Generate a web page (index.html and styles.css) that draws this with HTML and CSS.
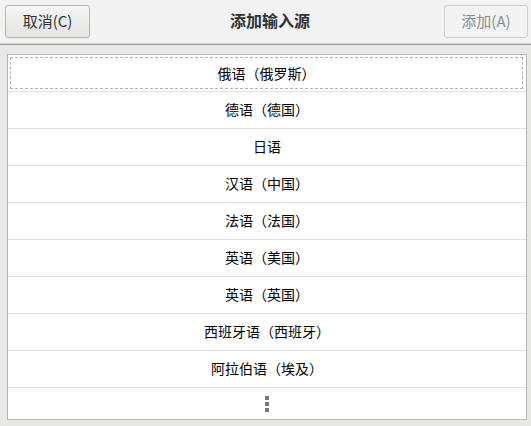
FILE: index.html
```html
<!DOCTYPE html>
<html lang="zh-CN">
<head>
<meta charset="utf-8">
<link rel="stylesheet" href="styles.css">
</head>
<body>
<div class="dialog">
  <header class="headerbar">
    <button class="btn">取消(C)</button>
    <div class="title">添加输入源</div>
    <button class="btn btn-disabled">添加(A)</button>
  </header>
  <main class="content">
    <div class="frame">
      <div class="row row-focus"><span class="focus">俄语（俄罗斯）</span></div>
      <div class="row">德语（德国）</div>
      <div class="row">日语</div>
      <div class="row">汉语（中国）</div>
      <div class="row">法语（法国）</div>
      <div class="row">英语（美国）</div>
      <div class="row">英语（英国）</div>
      <div class="row">西班牙语（西班牙）</div>
      <div class="row">阿拉伯语（埃及）</div>
      <div class="row row-more">
        <span class="dots"><i></i><i></i><i></i></span>
      </div>
    </div>
  </main>
</div>
</body>
</html>
```

FILE: styles.css
```css
* { box-sizing: border-box; }
html, body {
  margin: 0;
  padding: 0;
  width: 531px;
  height: 426px;
  overflow: hidden;
  font-family: "Noto Sans CJK SC", "Noto Sans", sans-serif;
  color: #000;
}
.dialog {
  display: flex;
  flex-direction: column;
  height: 426px;
  background: #e8e8e7;
}
.headerbar {
  height: 45px;
  flex: none;
  background: #f2f2f2;
  border-bottom: 1px solid #9b9b99;
  box-shadow: 0 -1px 0 #d6d6d4 inset;
  display: flex;
  align-items: flex-start;
  justify-content: space-between;
  padding: 5px 3px 0 5px;
}
.btn {
  height: 33px;
  width: 85px;
  font-family: inherit;
  font-size: 15px;
  color: #2e3436;
  background: linear-gradient(#f6f6f5, #e3e3e1);
  border: 1px solid #b6b6b3;
  border-radius: 3px;
  padding: 0 0 2px 0;
  line-height: 29px;
  box-shadow: 0 1px 0 rgba(0,0,0,0.04);
}
.btn-disabled {
  width: 84px;
  color: #8b8e8f;
  background: #f2f2f2;
  border-color: #cfcfcd;
  box-shadow: none;
}
.title {
  font-weight: bold;
  font-size: 16px;
  line-height: 31px;
  color: #2e3436;
  padding-left: 6px;
}
.content {
  flex: 1;
  padding: 9px 4px 6px 7px;
  display: flex;
}
.frame {
  flex: 1;
  background: #fff;
  border: 1px solid #b6b6b3;
  overflow: hidden;
  display: flex;
  flex-direction: column;
}
.row {
  height: 37px;
  flex: none;
  border-bottom: 1px solid #e2e2e2;
  display: flex;
  align-items: center;
  justify-content: center;
  font-size: 14px;
  line-height: 1;
  padding-bottom: 2px;
}
.row-focus {
  padding: 2px 3px 2px 2px;
}
.focus {
  flex: 1;
  align-self: stretch;
  display: flex;
  align-items: center;
  justify-content: center;
  border: 1px dashed #b0b0b0;
  padding-bottom: 1px;
}
.row-more {
  flex: 1;
  border-bottom: none;
  padding-bottom: 0;
}
.dots {
  display: flex;
  flex-direction: column;
  gap: 2px;
}
.dots i {
  display: block;
  width: 4px;
  height: 4px;
  background: #7a7a7a;
}
```
